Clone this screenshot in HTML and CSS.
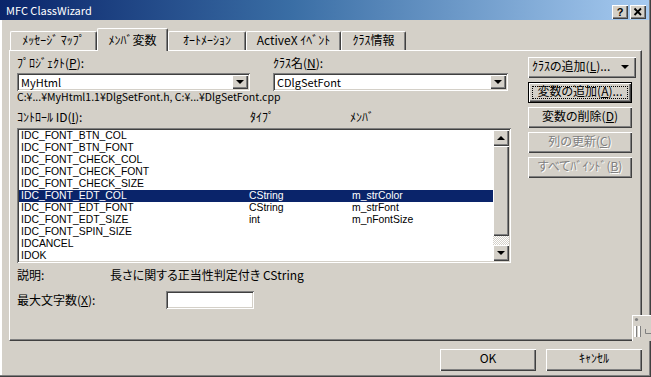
FILE: index.html
```html
<!DOCTYPE html>
<html lang="ja">
<head>
    <meta charset="UTF-8">
    <title>MFC ClassWizard</title>
    <link rel="stylesheet" href="styles.css">
</head>
<body>

<div class="window">

    <!-- Title bar -->
    <div class="titlebar">
        <span class="title">MFC ClassWizard</span>
        <div class="caption-btns">
            <span class="cap-btn raised"><span class="help-glyph">?</span></span>
            <span class="cap-btn raised">
                <svg width="16" height="14" viewBox="0 0 16 14">
                    <path d="M4.5 3.5 L11 10 M11 3.5 L4.5 10" stroke="#000" stroke-width="1.8" fill="none"/>
                </svg>
            </span>
        </div>
    </div>

    <div class="client">

        <!-- Tabs -->
        <div class="tabs">
            <div class="tab tab-msg">ﾒｯｾｰｼﾞ ﾏｯﾌﾟ</div>
            <div class="tab tab-member active">ﾒﾝﾊﾞ変数</div>
            <div class="tab tab-auto">ｵｰﾄﾒｰｼｮﾝ</div>
            <div class="tab tab-activex">ActiveX ｲﾍﾞﾝﾄ</div>
            <div class="tab tab-info">ｸﾗｽ情報</div>
        </div>

        <!-- Tab page -->
        <div class="panel">
            <div class="form">
                <div class="selectors">
                    <div class="field field-project">
                        <div class="label">ﾌﾟﾛｼﾞｪｸﾄ(<u>P</u>):</div>
                        <div class="combo sunken">
                            <span class="combo-text">MyHtml</span>
                            <span class="drop raised"><span class="tri-down"></span></span>
                        </div>
                    </div>
                    <div class="field field-class">
                        <div class="label">ｸﾗｽ名(<u>N</u>):</div>
                        <div class="combo sunken">
                            <span class="combo-text">CDlgSetFont</span>
                            <span class="drop raised"><span class="tri-down"></span></span>
                        </div>
                    </div>
                </div>

                <div class="path">C:¥...¥MyHtml1.1¥DlgSetFont.h, C:¥...¥DlgSetFont.cpp</div>

                <div class="list-head">
                    <span>ｺﾝﾄﾛｰﾙ ID(<u>I</u>):</span>
                    <span>ﾀｲﾌﾟ</span>
                    <span>ﾒﾝﾊﾞ</span>
                </div>

                <div class="listbox sunken">
                    <div class="rows">
                        <div class="row"><span>IDC_FONT_BTN_COL</span><span></span><span></span></div>
                        <div class="row"><span>IDC_FONT_BTN_FONT</span><span></span><span></span></div>
                        <div class="row"><span>IDC_FONT_CHECK_COL</span><span></span><span></span></div>
                        <div class="row"><span>IDC_FONT_CHECK_FONT</span><span></span><span></span></div>
                        <div class="row"><span>IDC_FONT_CHECK_SIZE</span><span></span><span></span></div>
                        <div class="row selected"><span>IDC_FONT_EDT_COL</span><span>CString</span><span>m_strColor</span></div>
                        <div class="row"><span>IDC_FONT_EDT_FONT</span><span>CString</span><span>m_strFont</span></div>
                        <div class="row"><span>IDC_FONT_EDT_SIZE</span><span>int</span><span>m_nFontSize</span></div>
                        <div class="row"><span>IDC_FONT_SPIN_SIZE</span><span></span><span></span></div>
                        <div class="row"><span>IDCANCEL</span><span></span><span></span></div>
                        <div class="row"><span>IDOK</span><span></span><span></span></div>
                    </div>
                    <div class="vscroll">
                        <span class="sb-btn raised"><span class="tri-up"></span></span>
                        <span class="sb-thumb raised"></span>
                        <span class="sb-track"></span>
                        <span class="sb-btn raised"><span class="tri-down"></span></span>
                    </div>
                </div>

                <div class="desc">
                    <span class="desc-label">説明:</span>
                    <span>長さに関する正当性判定付き CString</span>
                </div>

                <div class="maxlen">
                    <span class="maxlen-label">最大文字数(<u>X</u>):</span>
                    <span class="edit sunken"></span>
                </div>
            </div>

            <!-- Command buttons -->
            <div class="actions">
                <div class="btn raised btn-menu">
                    <span>ｸﾗｽの追加(<u>L</u>)...</span>
                    <span class="tri-down"></span>
                </div>
                <div class="btn raised btn-default">変数の追加(<u>A</u>)...</div>
                <div class="btn raised">変数の削除(<u>D</u>)</div>
                <div class="btn raised disabled">列の更新(<u>C</u>)</div>
                <div class="btn raised disabled">すべてﾊﾞｲﾝﾄﾞ(<u>B</u>)</div>
            </div>
        </div>

        <!-- Dialog buttons -->
        <div class="footer">
            <div class="btn raised btn-wide">OK</div>
            <div class="btn raised btn-wide">ｷｬﾝｾﾙ</div>
        </div>
    </div>

    <!-- IME toolbar floating over the dialog -->
    <div class="ime-bar">
        <svg width="19" height="26" viewBox="0 0 19 26">
            <circle cx="4.5" cy="4.5" r="1.6" fill="#808080"/>
            <rect x="2" y="11" width="2" height="11" fill="#fff"/>
            <rect x="4" y="11" width="1" height="11" fill="#808080"/>
            <rect x="6" y="11" width="2" height="11" fill="#fff"/>
            <rect x="8" y="11" width="1" height="11" fill="#808080"/>
            <path d="M13.5 14 V18.5 H19" stroke="#808080" stroke-width="1" fill="none"/>
        </svg>
    </div>
</div>

</body>
</html>
```

FILE: styles.css
```css
/* Classic dialog colours */
* {
    box-sizing: border-box;
}

body {
    margin: 0;
    background: #d4d0c8;
    font-family: "Noto Sans CJK JP", "Liberation Sans", sans-serif;
    font-size: 12px;
    font-feature-settings: "palt";
    color: #000;
}

u {
    text-underline-offset: 1px;
}

.window {
    position: relative;
    width: 651px;
    height: 377px;
    overflow: hidden;
    background: #d4d0c8;
    box-shadow: inset -1px -1px #404040, inset -2px -2px #808080, inset 2px 0 #fff;
}

/* 3D edges */
.raised {
    background: #d4d0c8;
    box-shadow: inset 1px 1px #fff, inset -1px -1px #404040, inset -2px -2px #808080;
}

.sunken {
    background: #fff;
    box-shadow: inset 1px 1px #808080, inset -1px -1px #fff, inset 2px 2px #404040, inset -2px -2px #d4d0c8;
}

.tri-down,
.tri-up {
    width: 0;
    height: 0;
    border-left: 4px solid transparent;
    border-right: 4px solid transparent;
}

.tri-down {
    border-top: 4px solid #000;
}

.tri-up {
    border-bottom: 4px solid #000;
}

/* Title bar */
.titlebar {
    display: flex;
    align-items: flex-start;
    height: 20px;
    margin-right: 2px;
    padding: 0 3px 0 6px;
    background: linear-gradient(to right, #0a246a, #3a6ea5 45%, #a6caf0);
    color: #fff;
}

.title {
    margin-top: 4px;
    font-size: 11px;
    line-height: 12px;
}

.caption-btns {
    display: flex;
    gap: 2px;
    margin-left: auto;
    margin-top: 5px;
}

.cap-btn {
    display: flex;
    align-items: center;
    justify-content: center;
    width: 16px;
    height: 14px;
}

.help-glyph {
    font-family: "Liberation Sans", sans-serif;
    font-weight: bold;
    font-size: 11px;
    line-height: 11px;
    color: #000;
}

/* Client area */
.client {
    padding: 8px 9px 0 9px;
}

.tabs {
    display: flex;
    align-items: flex-end;
    height: 22px;
    padding-left: 1px;
}

.tab {
    height: 19px;
    padding-top: 2px;
    line-height: 12px;
    text-align: center;
    white-space: nowrap;
    border-top: 1px solid #fff;
    border-left: 1px solid #fff;
    border-right: 1px solid #404040;
    border-radius: 2px 2px 0 0;
    box-shadow: inset -1px 0 #808080;
}

.tab.active {
    position: relative;
    z-index: 1;
    height: 23px;
    margin-bottom: -1px;
    padding-top: 5px;
    background: #d4d0c8;
}

.tab-msg { width: 87px; }
.tab-member { width: 71px; }
.tab-auto { width: 78px; }
.tab-activex { width: 95px; }
.tab-info { width: 65px; }

.panel {
    display: flex;
    height: 291px;
    padding: 5px 5px 0 7px;
    border-top: 1px solid #fff;
    border-left: 1px solid #fff;
    border-right: 1px solid #404040;
    border-bottom: 1px solid #404040;
    box-shadow: inset -1px -1px #808080;
}

/* Left side of the page */
.form {
    display: flex;
    flex-direction: column;
    width: 495px;
}

.selectors {
    display: flex;
    gap: 23px;
}

.field-project { width: 233px; }
.field-class { width: 235px; }

.label {
    height: 14px;
    line-height: 14px;
}

.combo {
    display: flex;
    align-items: center;
    height: 18px;
    margin-top: 3px;
    padding: 2px;
}

.combo-text {
    padding-left: 2px;
    font-size: 11px;
    line-height: 12px;
}

.drop {
    display: flex;
    align-items: center;
    justify-content: center;
    width: 16px;
    height: 14px;
    margin-left: auto;
}

.path {
    font-size: 10.5px;
    line-height: 12px;
    white-space: nowrap;
}

.list-head {
    display: grid;
    grid-template-columns: 233px 100px 1fr;
    margin-top: 7px;
    line-height: 14px;
}

.listbox {
    display: flex;
    width: 494px;
    height: 135px;
    margin-top: 4px;
    padding: 2px;
    overflow: hidden;
}

.rows {
    flex: 1;
}

.row {
    display: grid;
    grid-template-columns: 228px 103px 1fr;
    height: 12px;
    padding-left: 2px;
    font-family: "Liberation Sans", sans-serif;
    font-size: 10.4px;
    line-height: 12px;
    white-space: nowrap;
}

.row.selected {
    background: #0a246a;
    color: #fff;
}

.vscroll {
    display: flex;
    flex-direction: column;
    width: 16px;
}

.sb-btn {
    display: flex;
    align-items: center;
    justify-content: center;
    height: 16px;
    flex: none;
}

.sb-thumb {
    height: 90px;
    flex: none;
}

.sb-track {
    flex: 1;
    background: repeating-conic-gradient(#fff 0 25%, #d4d0c8 0 50%) 0 0 / 2px 2px;
}

.desc {
    display: flex;
    margin-top: 5px;
    line-height: 14px;
}

.desc-label { width: 93px; }

.maxlen {
    display: flex;
    align-items: center;
    height: 18px;
    margin-top: 9px;
    line-height: 12px;
}

.maxlen-label { width: 149px; }

.edit {
    width: 88px;
    height: 18px;
}

/* Buttons */
.btn {
    display: flex;
    align-items: center;
    justify-content: center;
    height: 21px;
    padding-bottom: 3px;
    line-height: 12px;
    white-space: nowrap;
}

.actions {
    display: flex;
    flex-direction: column;
    align-items: flex-start;
    gap: 4px;
    width: 108px;
    margin-top: 1px;
    margin-left: 16px;
}

.actions .btn {
    width: 104px;
}

.actions .btn-menu {
    width: 108px;
    justify-content: space-between;
    padding-left: 4px;
    padding-right: 7px;
}

.btn-menu .tri-down {
    margin-top: 2px;
}

.btn-default {
    border: 1px solid #000;
    outline: 1px dotted #000;
    outline-offset: -5px;
}

.btn.disabled {
    color: #808080;
    text-shadow: 1px 1px 0 #fff;
}

.footer {
    display: flex;
    justify-content: flex-end;
    gap: 10px;
    padding-top: 8px;
}

.btn-wide {
    width: 96px;
    height: 22px;
    padding-bottom: 4px;
}

/* IME toolbar */
.ime-bar {
    position: absolute;
    left: 632px;
    top: 315px;
    width: 19px;
    height: 26px;
    background: #d4d0c8;
    border-top: 1px solid #fff;
    border-left: 1px solid #fff;
}

.ime-bar svg {
    display: block;
    margin: -1px 0 0 -1px;
}
```
